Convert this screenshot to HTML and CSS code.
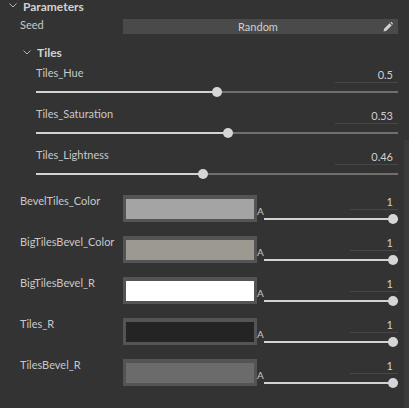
FILE: index.html
```html
<!DOCTYPE html>
<html>
<head>
<meta charset="utf-8">
<link rel="stylesheet" href="styles.css">
</head>
<body>
<div class="panel">
  <div class="group-head">
    <svg class="chev" width="8" height="5" viewBox="0 0 8 5"><polyline points="0.5,0.5 4,4 7.5,0.5" fill="none" stroke="#b4b4b4" stroke-width="1"/></svg>
    <span>Parameters</span>
  </div>

  <div class="seed-row">
    <div class="label">Seed</div>
    <div class="seed-field">
      <span class="seed-text">Random</span>
      <svg class="pencil" width="10" height="11" viewBox="0 0 10 11"><path d="M0.5 10.5 L1.3 7.6 L6.6 2.3 L8.7 4.4 L3.4 9.7 Z" fill="#d0d0d0"/><path d="M7.3 1.6 L8.2 0.7 L10 2.5 L9.4 3.7 Z" fill="#d0d0d0"/></svg>
    </div>
  </div>

  <div class="sub-head">
    <svg class="chev" width="8" height="5" viewBox="0 0 8 5"><polyline points="0.5,0.5 4,4 7.5,0.5" fill="none" stroke="#b4b4b4" stroke-width="1"/></svg>
    <span>Tiles</span>
  </div>

  <div class="sliders">
    <div class="srow">
      <div class="label">Tiles_Hue</div>
      <div class="value wide">0.5</div>
      <div class="track"><div class="fill" style="width:50%"></div><div class="thumb" style="left:calc(50% - 5px)"></div></div>
    </div>
    <div class="srow">
      <div class="label">Tiles_Saturation</div>
      <div class="value wide">0.53</div>
      <div class="track"><div class="fill" style="width:53%"></div><div class="thumb" style="left:calc(53% - 5.3px)"></div></div>
    </div>
    <div class="srow">
      <div class="label">Tiles_Lightness</div>
      <div class="value wide">0.46</div>
      <div class="track"><div class="fill" style="width:46%"></div><div class="thumb" style="left:calc(46% - 4.6px)"></div></div>
    </div>
  </div>

  <div class="colors">
    <div class="crow">
      <div class="label clabel">BevelTiles_Color</div>
      <div class="swatch"><div class="swatch-in" style="background:#a4a4a4"></div></div>
      <div class="alpha">A</div>
      <div class="cslider">
        <div class="value narrow">1</div>
        <div class="track"><div class="fill" style="width:100%"></div><div class="thumb" style="left:calc(100% - 10px)"></div></div>
      </div>
    </div>
    <div class="crow">
      <div class="label clabel">BigTilesBevel_Color</div>
      <div class="swatch"><div class="swatch-in" style="background:#9c9991"></div></div>
      <div class="alpha">A</div>
      <div class="cslider">
        <div class="value narrow">1</div>
        <div class="track"><div class="fill" style="width:100%"></div><div class="thumb" style="left:calc(100% - 10px)"></div></div>
      </div>
    </div>
    <div class="crow">
      <div class="label clabel">BigTilesBevel_R</div>
      <div class="swatch"><div class="swatch-in" style="background:#ffffff"></div></div>
      <div class="alpha">A</div>
      <div class="cslider">
        <div class="value narrow">1</div>
        <div class="track"><div class="fill" style="width:100%"></div><div class="thumb" style="left:calc(100% - 10px)"></div></div>
      </div>
    </div>
    <div class="crow">
      <div class="label clabel">Tiles_R</div>
      <div class="swatch"><div class="swatch-in" style="background:#242424"></div></div>
      <div class="alpha">A</div>
      <div class="cslider">
        <div class="value narrow">1</div>
        <div class="track"><div class="fill" style="width:100%"></div><div class="thumb" style="left:calc(100% - 10px)"></div></div>
      </div>
    </div>
    <div class="crow">
      <div class="label clabel">TilesBevel_R</div>
      <div class="swatch"><div class="swatch-in" style="background:#6b6b6b"></div></div>
      <div class="alpha">A</div>
      <div class="cslider">
        <div class="value narrow">1</div>
        <div class="track"><div class="fill" style="width:100%"></div><div class="thumb" style="left:calc(100% - 10px)"></div></div>
      </div>
    </div>
  </div>

  <div class="scrollbar"></div>
</div>
</body>
</html>
```

FILE: styles.css
```css
html, body {
  margin: 0;
  padding: 0;
  background: #333333;
  overflow: hidden;
}
body {
  width: 409px;
  height: 408px;
  font-family: Lato, "Liberation Sans", sans-serif;
  font-size: 11px;
  color: #cccccc;
}
.panel {
  position: relative;
  width: 409px;
  height: 408px;
  box-sizing: border-box;
  padding: 0 11px 0 0;
}
.group-head {
  display: flex;
  align-items: center;
  height: 13px;
  padding-left: 9px;
  font-size: 12px;
  font-weight: bold;
  color: #d2d2d2;
  line-height: 12px;
}
.group-head .chev { margin-right: 6px; margin-top: -2px; }
.sub-head {
  display: flex;
  align-items: center;
  margin-top: 12px;
  height: 14px;
  padding-left: 23px;
  font-size: 12px;
  font-weight: bold;
  color: #d2d2d2;
  line-height: 14px;
}
.sub-head .chev { margin-right: 6px; margin-top: -2px; }

.label {
  line-height: 14px;
  white-space: nowrap;
  color: #c8c8c8;
}

.seed-row {
  display: flex;
  align-items: flex-start;
  margin-top: 5px;
  padding-left: 20px;
}
.seed-row .label { width: 103px; }
.seed-field {
  flex: 1;
  margin-top: 1px;
  height: 15px;
  background: #4a4a4a;
  display: flex;
  align-items: center;
  padding-right: 5px;
}
.seed-text {
  flex: 1;
  text-align: center;
  line-height: 15px;
  color: #d0d0d0;
  padding-left: 10px;
}
.pencil { flex: none; }

.sliders {
  display: flex;
  flex-direction: column;
  gap: 10px;
  margin-top: 6px;
  padding-left: 36px;
}
.srow {
  display: grid;
  grid-template-columns: 1fr auto;
  align-items: start;
}
.srow .track { grid-column: 1 / 3; margin-top: 4px; }

.value {
  margin-top: 2px;
  line-height: 14px;
  height: 14px;
  text-align: right;
  color: #d0d0d0;
  border-bottom: 1px solid #474747;
  box-sizing: content-box;
}
.value.wide { width: 58px; padding-right: 5px; }
.value.narrow { width: 43px; padding-right: 5px; margin-top: 1px; }

.track {
  position: relative;
  height: 10px;
}
.track::before {
  content: "";
  position: absolute;
  left: 0;
  right: 0;
  top: 4px;
  height: 2px;
  background: #6f6f6f;
}
.fill {
  position: absolute;
  left: 0;
  top: 4px;
  height: 2px;
  background: #d3d3d3;
}
.thumb {
  position: absolute;
  top: 0;
  width: 10px;
  height: 10px;
  border-radius: 50%;
  background: #d6d6d6;
}

.colors {
  display: flex;
  flex-direction: column;
  gap: 11px;
  margin-top: 15px;
  padding-left: 20px;
}
.crow {
  display: flex;
  align-items: flex-start;
}
.clabel { width: 103px; flex: none; }
.swatch {
  flex: none;
  width: 134px;
  height: 27px;
  margin-top: 1px;
  box-sizing: border-box;
  border: 3px solid #545454;
  border-top-width: 4px;
}
.swatch-in { width: 100%; height: 100%; }
.alpha {
  flex: none;
  width: 7px;
  margin-top: 11px;
  font-size: 10px;
  line-height: 12px;
  color: #c8c8c8;
  text-align: left;
}
.cslider {
  flex: 1;
  display: flex;
  flex-direction: column;
  align-items: stretch;
}
.cslider .value { align-self: flex-end; }
.cslider .track { margin-top: 4px; }

.scrollbar {
  position: absolute;
  right: 0;
  top: 140px;
  bottom: 0;
  width: 5px;
  background: #3b3b3b;
}
```
